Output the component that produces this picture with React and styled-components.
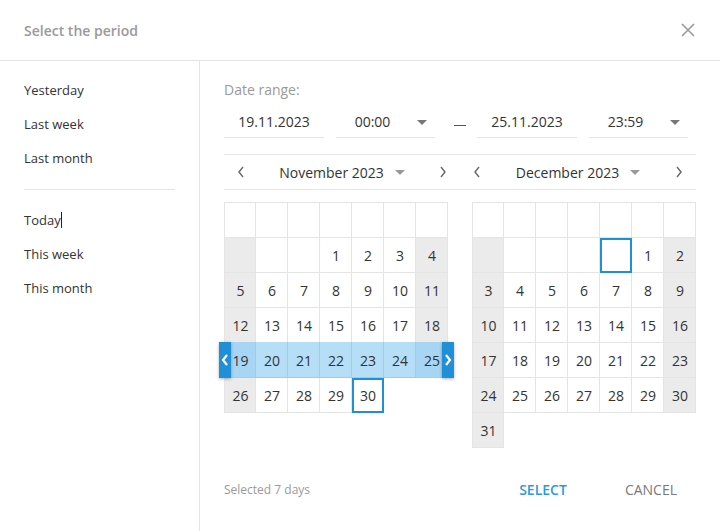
import React from "react";
import styled, { createGlobalStyle, css } from "styled-components";

const GlobalStyle = createGlobalStyle`
  html, body { margin: 0; padding: 0; background: #fff; }
  body { font-family: "Open Sans", "Liberation Sans", sans-serif; color: #333; }
  * { box-sizing: border-box; }
`;

const LINE = "#e4e4e4";
const BLUE = "#1f8fd8";

const Dialog = styled.div`
  width: 720px;
  height: 531px;
  display: flex;
  flex-direction: column;
  background: #fff;
`;

const Header = styled.div`
  height: 61px;
  flex: none;
  display: flex;
  align-items: center;
  justify-content: space-between;
  padding: 0 24px;
  border-bottom: 1px solid ${LINE};
`;

const Title = styled.div`
  font-size: 14px;
  font-weight: 600;
  color: #9a9a9a;
`;

const CloseBtn = styled.button`
  border: 0;
  background: none;
  padding: 0;
  width: 16px;
  height: 16px;
  display: flex;
  cursor: pointer;
`;

const Body = styled.div`
  flex: 1;
  display: flex;
  min-height: 0;
`;

const Sidebar = styled.div`
  width: 200px;
  flex: none;
  border-right: 1px solid ${LINE};
  padding-top: 12px;
`;

const Preset = styled.div`
  height: 34px;
  line-height: 34px;
  padding: 0 24px;
  font-size: 13px;
  color: #333;
  cursor: pointer;
`;

const TextCaret = styled.span`
  display: inline-block;
  width: 1px;
  height: 16px;
  background: #222;
  vertical-align: -3px;
`;

const Divider = styled.div`
  height: 1px;
  background: ${LINE};
  margin: 14px 24px 13px;
`;

const Main = styled.div`
  flex: 1;
  display: flex;
  flex-direction: column;
  padding: 19px 24px 28px;
`;

const Label = styled.div`
  font-size: 14px;
  line-height: 20px;
  color: #9a9a9a;
  margin-bottom: 8px;
`;

const InputsRow = styled.div`
  display: flex;
  align-items: flex-start;
`;

const Field = styled.div`
  position: relative;
  width: ${(p) => p.$w}px;
  height: 30px;
  line-height: 28px;
  border-bottom: 1px solid ${LINE};
  font-size: 14px;
  color: #333;
  text-align: center;
  padding-right: ${(p) => (p.$select ? 26 : 0)}px;
  margin-right: ${(p) => p.$mr || 0}px;
`;

const FieldCaret = styled.span`
  position: absolute;
  right: 8px;
  top: 12px;
  width: 0;
  height: 0;
  border-left: 5px solid transparent;
  border-right: 5px solid transparent;
  border-top: 5px solid #777;
`;

const Dash = styled.div`
  width: 42px;
  flex: none;
  display: flex;
  justify-content: center;
  padding: 17px 0 0 8px;
  &::after {
    content: "";
    width: 12px;
    height: 1px;
    background: #555;
  }
`;

const NavRow = styled.div`
  display: grid;
  grid-template-columns: 1fr 1fr;
  height: 36px;
  margin-top: 16px;
  border-top: 1px solid ${LINE};
  border-bottom: 1px solid ${LINE};
  width: 472px;
`;

const NavHalf = styled.div`
  display: flex;
  align-items: center;
  justify-content: space-between;
  padding: 0 12px;
`;

const Arrow = styled.button`
  border: 0;
  background: none;
  padding: 0;
  width: 10px;
  height: 14px;
  display: flex;
  align-items: center;
  justify-content: center;
  cursor: pointer;
`;

const MonthTitle = styled.div`
  display: flex;
  align-items: center;
  gap: 11px;
  font-size: 14px;
  color: #333;
  &::after {
    content: "";
    border-left: 5px solid transparent;
    border-right: 5px solid transparent;
    border-top: 5px solid #999;
    margin-top: 1px;
  }
`;

const Calendars = styled.div`
  display: flex;
  gap: 24px;
  margin-top: 12px;
`;

const Grid = styled.div`
  position: relative;
  display: grid;
  grid-template-columns: 31px repeat(6, 32px);
  grid-auto-rows: 35px;
  align-self: flex-start;
  border-top: 1px solid ${LINE};
  border-left: 1px solid ${LINE};
`;

const Cell = styled.div`
  display: flex;
  align-items: center;
  justify-content: center;
  font-size: 14px;
  color: #333;
  background: ${(p) =>
    p.$range ? (p.$weekend ? "#a7d5f3" : "#b6def7") : p.$weekend ? "#ebebeb" : "#fff"};
  box-shadow: ${(p) => (p.$focus ? `inset 0 0 0 2px ${BLUE},` : "")}
    inset -1px -1px 0 ${(p) => (p.$range ? "#9ccdee" : LINE)};
  ${(p) =>
    p.$range &&
    css`
      margin-top: -1px;
    `}
`;

const Handle = styled.div`
  position: absolute;
  top: 139px;
  ${(p) => (p.$side === "left" ? "left: -6px;" : "right: -6px;")}
  width: 12px;
  height: 36px;
  background: ${BLUE};
  box-shadow: 0 1px 3px rgba(0, 0, 0, 0.3);
  display: flex;
  align-items: center;
  justify-content: center;
`;

const Footer = styled.div`
  margin-top: auto;
  display: flex;
  align-items: center;
  height: 28px;
  padding-right: 2px;
`;

const Summary = styled.div`
  font-size: 12px;
  color: #9a9a9a;
  flex: 1;
`;

const Action = styled.button`
  border: 0;
  background: none;
  padding: 0 17px;
  height: 28px;
  font-family: inherit;
  font-size: 14px;
  font-weight: ${(p) => (p.$primary ? 600 : 400)};
  color: ${(p) => (p.$primary ? "#2b9be0" : "#7a7a7a")};
  margin-left: ${(p) => (p.$primary ? 0 : 24)}px;
  cursor: pointer;
`;

const Chevron = ({ dir, color = "#666", w = 1.4 }) => (
  <svg width="8" height="12" viewBox="0 0 8 12">
    <polyline
      points={dir === "left" ? "6,1 2,6 6,11" : "2,1 6,6 2,11"}
      fill="none"
      stroke={color}
      strokeWidth={w}
    />
  </svg>
);

function buildMonth(year, month) {
  const lead = new Date(year, month, 1).getDay();
  const days = new Date(year, month + 1, 0).getDate();
  const cells = [];
  for (let i = 0; i < lead; i++) cells.push(null);
  for (let d = 1; d <= days; d++) cells.push(d);
  return cells;
}

function MonthGrid({ year, month, range, focusIndex, handles }) {
  const cells = buildMonth(year, month);
  return (
    <Grid>
      {Array.from({ length: 7 }).map((_, i) => (
        <Cell key={"h" + i} />
      ))}
      {cells.map((d, i) => {
        const col = i % 7;
        const inRange = range && d && d >= range[0] && d <= range[1];
        return (
          <Cell
            key={i}
            $weekend={col === 0 || col === 6}
            $range={inRange}
            $focus={i === focusIndex}
          >
            {d}
          </Cell>
        );
      })}
      {handles && (
        <>
          <Handle $side="left">
            <Chevron dir="left" color="#fff" w={2.2} />
          </Handle>
          <Handle $side="right">
            <Chevron dir="right" color="#fff" w={2.2} />
          </Handle>
        </>
      )}
    </Grid>
  );
}

export default function App() {
  return (
    <Dialog>
      <GlobalStyle />
      <Header>
        <Title>Select the period</Title>
        <CloseBtn aria-label="Close">
          <svg width="16" height="16" viewBox="0 0 16 16">
            <path d="M2 2 L14 14 M14 2 L2 14" stroke="#9a9a9a" strokeWidth="1.6" />
          </svg>
        </CloseBtn>
      </Header>
      <Body>
        <Sidebar>
          <Preset>Yesterday</Preset>
          <Preset>Last week</Preset>
          <Preset>Last month</Preset>
          <Divider />
          <Preset>
            Today
            <TextCaret />
          </Preset>
          <Preset>This week</Preset>
          <Preset>This month</Preset>
        </Sidebar>
        <Main>
          <Label>Date range:</Label>
          <InputsRow>
            <Field $w={100} $mr={12}>19.11.2023</Field>
            <Field $w={99} $select>
              00:00
              <FieldCaret />
            </Field>
            <Dash />
            <Field $w={100} $mr={12}>25.11.2023</Field>
            <Field $w={99} $select>
              23:59
              <FieldCaret />
            </Field>
          </InputsRow>
          <NavRow>
            <NavHalf>
              <Arrow><Chevron dir="left" /></Arrow>
              <MonthTitle>November 2023</MonthTitle>
              <Arrow><Chevron dir="right" /></Arrow>
            </NavHalf>
            <NavHalf>
              <Arrow><Chevron dir="left" /></Arrow>
              <MonthTitle>December 2023</MonthTitle>
              <Arrow><Chevron dir="right" /></Arrow>
            </NavHalf>
          </NavRow>
          <Calendars>
            <MonthGrid year={2023} month={10} range={[19, 25]} focusIndex={32} handles />
            <MonthGrid year={2023} month={11} focusIndex={4} />
          </Calendars>
          <Footer>
            <Summary>Selected 7 days</Summary>
            <Action $primary>SELECT</Action>
            <Action>CANCEL</Action>
          </Footer>
        </Main>
      </Body>
    </Dialog>
  );
}
